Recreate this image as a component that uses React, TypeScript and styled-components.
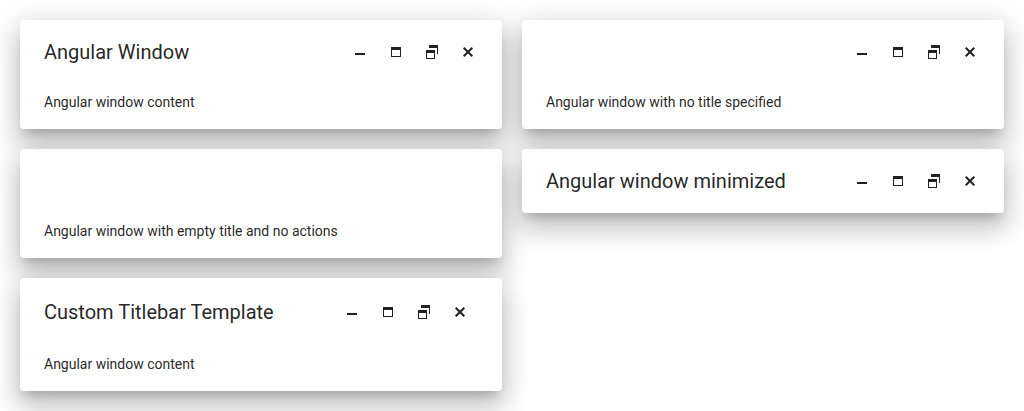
import React from "react";
import styled, { createGlobalStyle } from "styled-components";

const GlobalStyle = createGlobalStyle`
  body {
    margin: 0;
    background: #fff;
    color: rgba(0, 0, 0, 0.87);
    font-family: Roboto, "Liberation Sans", sans-serif;
    font-size: 14px;
    line-height: 20px;
  }
`;

const Page = styled.main`
  display: grid;
  grid-template-columns: repeat(2, minmax(0, 1fr));
  align-items: start;
  gap: 20px;
  padding: 20px;
  overflow: hidden;
`;

const Column = styled.div`
  display: grid;
  gap: 20px;
`;

const Panel = styled.section`
  border-radius: 4px;
  background: #fff;
  box-shadow:
    0 8px 10px -5px rgba(0, 0, 0, 0.2),
    0 16px 24px 2px rgba(0, 0, 0, 0.14),
    0 6px 30px 5px rgba(0, 0, 0, 0.12);
`;

const TitleBar = styled.header<{ $custom?: boolean }>`
  display: flex;
  align-items: center;
  box-sizing: border-box;
  height: ${(p) => (p.$custom ? 68 : 64)}px;
  padding: 0 ${(p) => (p.$custom ? 24 : 16)}px 0 24px;
`;

const Title = styled.h2`
  flex: 1;
  margin: 0;
  font-size: 20px;
  line-height: 32px;
  font-weight: 400;
`;

const Actions = styled.div`
  display: flex;
`;

const Action = styled.button`
  display: grid;
  place-items: center;
  width: 36px;
  height: 36px;
  padding: 0;
  border: 0;
  border-radius: 4px;
  background: transparent;
  color: #212121;
  cursor: pointer;
`;

const Content = styled.p`
  margin: 0;
  padding: 8px 24px 17px;
`;

const icons = {
  Minimize: <path d="M3 9h10v2H3z" />,
  Maximize: <path d="M3 3h10v10H3zM4 6v6h8V6z" fillRule="evenodd" />,
  Restore: (
    <path d="M5 1h9v9h-1V4H5zM2 6h9v9H2zM3 9v5h7V9z" fillRule="evenodd" />
  ),
  Close: <path d="M3.7 3.7l8.6 8.6M12.3 3.7l-8.6 8.6" stroke="currentColor" strokeWidth="2" />,
};

type WindowProps = {
  title?: string;
  content?: string;
  actions?: boolean;
  custom?: boolean;
};

function Window({ title, content, actions = true, custom }: WindowProps) {
  return (
    <Panel>
      <TitleBar $custom={custom}>
        {title ? <Title>{title}</Title> : <Title as="div" />}
        {actions && (
          <Actions>
            {Object.entries(icons).map(([name, shape]) => (
              <Action key={name} type="button" aria-label={name}>
                <svg width="16" height="16" viewBox="0 0 16 16" fill="currentColor">
                  {shape}
                </svg>
              </Action>
            ))}
          </Actions>
        )}
      </TitleBar>
      {content && <Content>{content}</Content>}
    </Panel>
  );
}

export default function App() {
  return (
    <>
      <GlobalStyle />
      <Page>
        <Column>
          <Window title="Angular Window" content="Angular window content" />
          <Window content="Angular window with empty title and no actions" actions={false} />
          <Window title="Custom Titlebar Template" content="Angular window content" custom />
        </Column>
        <Column>
          <Window content="Angular window with no title specified" />
          <Window title="Angular window minimized" />
        </Column>
      </Page>
    </>
  );
}
